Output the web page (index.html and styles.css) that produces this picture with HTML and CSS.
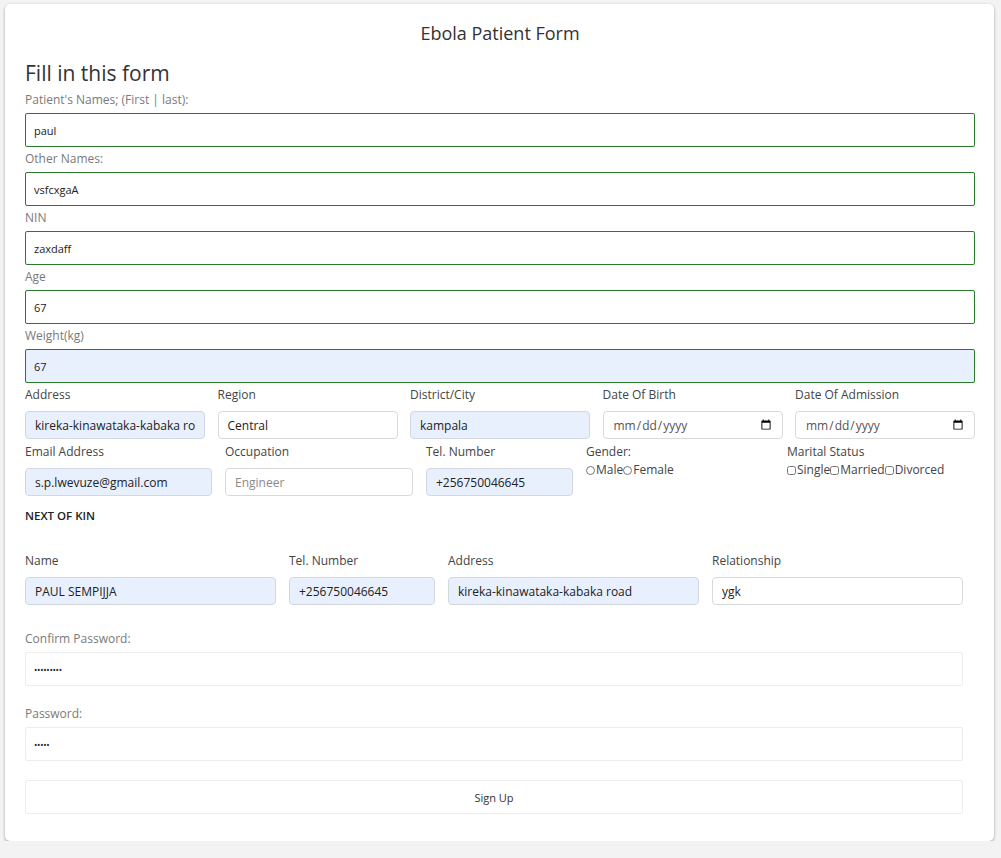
FILE: index.html
```html
<!DOCTYPE html>
<html lang="en">
<head>
<meta charset="utf-8">
<title>Ebola Patient Form</title>
<link rel="stylesheet" href="styles.css">
</head>
<body>
<div class="card">
  <h2 class="title">Ebola Patient Form</h2>
  <h3 class="subtitle">Fill in this form</h3>

  <div class="field">
    <label class="lbl">Patient's Names; (First | last):</label>
    <input class="inp valid" type="text" value="paul">
  </div>
  <div class="field">
    <label class="lbl">Other Names:</label>
    <input class="inp valid" type="text" value="vsfcxgaA">
  </div>
  <div class="field">
    <label class="lbl">NIN</label>
    <input class="inp valid" type="text" value="zaxdaff">
  </div>
  <div class="field">
    <label class="lbl">Age</label>
    <input class="inp valid" type="text" value="67">
  </div>
  <div class="field">
    <label class="lbl">Weight(kg)</label>
    <input class="inp valid auto" type="text" value="67">
  </div>

  <div class="row row-five">
    <div class="cell">
      <label class="clbl">Address</label>
      <input class="sinp auto" type="text" value="kireka-kinawataka-kabaka road">
    </div>
    <div class="cell">
      <label class="clbl">Region</label>
      <input class="sinp" type="text" value="Central">
    </div>
    <div class="cell">
      <label class="clbl">District/City</label>
      <input class="sinp auto" type="text" value="kampala">
    </div>
    <div class="cell">
      <label class="clbl">Date Of Birth</label>
      <input class="sinp date" type="date">
    </div>
    <div class="cell">
      <label class="clbl">Date Of Admission</label>
      <input class="sinp date" type="date">
    </div>
  </div>

  <div class="row row-second">
    <div class="cell">
      <label class="clbl">Email Address</label>
      <input class="sinp auto" type="text" value="s.p.lwevuze@gmail.com">
    </div>
    <div class="cell">
      <label class="clbl">Occupation</label>
      <input class="sinp" type="text" placeholder="Engineer">
    </div>
    <div class="cell">
      <label class="clbl">Tel. Number</label>
      <input class="sinp auto" type="text" value="+256750046645">
    </div>
    <div class="cell">
      <label class="clbl">Gender:</label>
      <div class="choices">
        <input class="radio" type="radio" name="g"><span>Male</span><input class="radio" type="radio" name="g"><span>Female</span>
      </div>
    </div>
    <div class="cell">
      <label class="clbl">Marital Status</label>
      <div class="choices">
        <input class="check" type="checkbox"><span>Single</span><input class="check" type="checkbox"><span>Married</span><input class="check" type="checkbox"><span>Divorced</span>
      </div>
    </div>
  </div>

  <div class="kin-title">NEXT OF KIN</div>

  <div class="inner">
    <div class="row row-kin">
      <div class="cell">
        <label class="clbl">Name</label>
        <input class="sinp auto" type="text" value="PAUL SEMPIJJA">
      </div>
      <div class="cell">
        <label class="clbl">Tel. Number</label>
        <input class="sinp auto" type="text" value="+256750046645">
      </div>
      <div class="cell">
        <label class="clbl">Address</label>
        <input class="sinp auto" type="text" value="kireka-kinawataka-kabaka road">
      </div>
      <div class="cell">
        <label class="clbl">Relationship</label>
        <input class="sinp" type="text" value="ygk">
      </div>
    </div>

    <div class="pfield first">
      <label class="lbl">Confirm Password:</label>
      <input class="inp plain pass" type="password" value="123456789">
    </div>
    <div class="pfield">
      <label class="lbl">Password:</label>
      <input class="inp plain pass" type="password" value="12345">
    </div>
    <button class="btn" type="button">Sign Up</button>
  </div>
</div>
</body>
</html>
```

FILE: styles.css
```css
html, body {
  margin: 0;
  padding: 0;
  background: #f3f3f3;
  font-family: "Open Sans", "Noto Sans", sans-serif;
  color: #333;
}

.card {
  margin: 4px 7px 0 5px;
  background: #fff;
  border-radius: 5px;
  box-shadow: 0 1px 3px rgba(0, 0, 0, 0.35);
  padding: 0 19px 27px 20px;
  overflow: hidden;
}

.title {
  margin: 16px 0 0;
  font-size: 18px;
  font-weight: 400;
  line-height: 26px;
  text-align: center;
  color: #333;
}

.subtitle {
  margin: 12px 0 0;
  font-size: 21px;
  font-weight: 400;
  line-height: 30px;
  color: #333;
}

.field {
  display: flex;
  flex-direction: column;
}

.lbl {
  display: block;
  margin: 4px 0 5px;
  font-size: 12px;
  line-height: 16px;
  color: #7a7a7a;
}

.inp {
  box-sizing: border-box;
  width: 100%;
  height: 34px;
  margin: 0;
  padding: 0 8px;
  font-family: "Open Sans", sans-serif;
  font-size: 11px;
  color: #222;
  background: #fff;
  outline: none;
}

.valid {
  border: 1px solid #2b7a2b;
  border-radius: 2px;
}

.auto {
  background: #e8f0fe;
}

.plain {
  border: 1px solid #ededed;
  border-radius: 2px;
}

.pass {
  font-size: 9px;
  letter-spacing: -0.3px;
}

.row {
  display: grid;
}

.row-five {
  margin-top: 4px;
  grid-template-columns: repeat(5, 1fr);
  column-gap: 12.5px;
}

.row-second {
  margin-top: 5px;
  grid-template-columns: 187px 188px 147px 188px 1fr;
  column-gap: 13px;
}

.cell {
  display: flex;
  flex-direction: column;
  min-width: 0;
}

.clbl {
  display: block;
  font-size: 12px;
  line-height: 16px;
  color: #444;
  margin-bottom: 8px;
}

.sinp {
  box-sizing: border-box;
  width: 100%;
  height: 28px;
  margin: 0;
  padding: 0 9px;
  border: 1px solid #d9d9d9;
  border-radius: 4px;
  font-family: "Open Sans", sans-serif;
  font-size: 12px;
  color: #222;
  outline: none;
}

.sinp.auto {
  background: #e8f0fe;
  border-color: #d3d8e0;
}

.sinp::placeholder {
  color: #8a8a8a;
}

.date {
  color: #555;
  padding-right: 8px;
}

.choices {
  display: flex;
  align-items: center;
  margin-top: -6px;
  font-size: 12px;
  line-height: 16px;
  color: #444;
}

.radio,
.check {
  width: 9px;
  height: 9px;
  margin: 0 1px 0 0;
  flex: none;
}

.kin-title {
  margin-top: 12px;
  font-size: 11.5px;
  font-weight: 600;
  line-height: 16px;
  color: #222;
}

.inner {
  margin-right: 12px;
}

.row-kin {
  margin-top: 29px;
  grid-template-columns: 251px 146px 251px 1fr;
  column-gap: 13px;
}

.pfield {
  display: flex;
  flex-direction: column;
  margin-top: 16px;
}

.pfield.first {
  margin-top: 22px;
}

.btn {
  display: block;
  box-sizing: border-box;
  width: 100%;
  height: 34px;
  margin-top: 19px;
  border: 1px solid #ededed;
  border-radius: 2px;
  background: #fff;
  font-family: "Open Sans", sans-serif;
  font-size: 11px;
  color: #333;
}
```
